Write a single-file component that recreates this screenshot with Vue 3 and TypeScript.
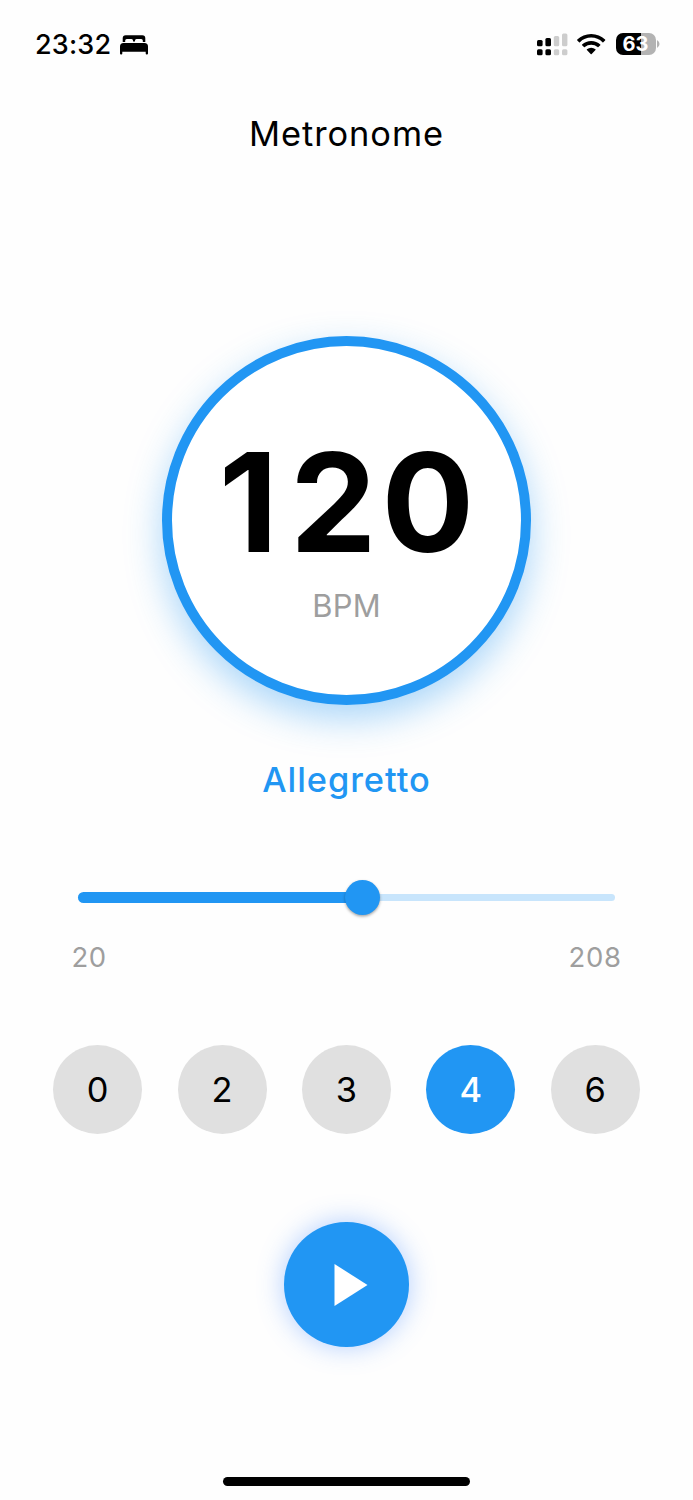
<script setup lang="ts">
import { computed, ref } from 'vue'

const min = 20
const max = 208
const bpm = ref<number>(120)
const beats: number[] = [0, 2, 3, 4, 6]
const selected = ref<number>(4)
const position = computed(() => `${((bpm.value - min) / (max - min)) * 100}%`)
const digits = computed(() => String(bpm.value).split(''))
</script>

<template>
  <main class="screen">
    <header class="status">
      <span class="clock">23:32</span>
      <svg class="bed" viewBox="0 0 28 20" width="28" height="20">
        <path d="M2.7 7V3.2Q2.7 .2 5.7 .2H22.3Q25.300 .2 25.300 3.200V7H22.800V5.600Q22.800 4 21.200 4H16.500Q15 4 15 5.500V6.400H13V5.500Q13 4 11.500 4H6.800Q5.200 4 5.200 5.600V7Z" />
        <path d="M0 11.500Q0 8 3.500 8H24.500Q28 8 28 11.500V18.500Q28 19.500 27 19.500H26.700Q25.700 19.500 25.700 18.500V16.700H2.300V18.500Q2.300 19.500 1.300 19.500H1Q0 19.500 0 18.500Z" />
      </svg>
      <svg class="signal" viewBox="0 0 31 23" width="31" height="23">
        <rect x="0" y="7" width="5.600" height="6.300" rx="1.500" />
        <rect x="8.400" y="5" width="5.600" height="8.300" rx="1.500" />
        <g fill="#cdcdcd">
          <rect x="16.800" y="3" width="5.400" height="10.300" rx="1.500" />
          <rect x="25" y="0.500" width="5.400" height="12.800" rx="1.500" />
          <rect x="16.800" y="16.300" width="5.400" height="6" rx="1.500" />
          <rect x="25" y="16.300" width="5.400" height="6" rx="1.500" />
        </g>
        <rect x="0" y="16.300" width="5.600" height="6" rx="1.500" />
        <rect x="8.400" y="16.300" width="5.600" height="6" rx="1.500" />
      </svg>
      <svg class="wifi" viewBox="0 0 28.400 21" width="28.400" height="21">
        <path d="M14.200 0C19.600 0 24.500 2.100 28.100 5.600Q28.500 6 28.100 6.400L26.300 8.200Q25.900 8.600 25.500 8.200A16.200 16.200 0 0 0 2.900 8.200Q2.500 8.600 2.100 8.200L.3 6.400Q-.1 6 .3 5.600C3.900 2.100 8.800 0 14.200 0Z" />
        <path d="M14.200 6.900C17.700 6.900 20.900 8.200 23.300 10.400Q23.700 10.800 23.300 11.200L21.400 13.100Q21 13.500 20.600 13.100A9.600 9.600 0 0 0 7.800 13.100Q7.400 13.500 7 13.100L5.100 11.200Q4.700 10.800 5.100 10.400C7.500 8.200 10.700 6.900 14.200 6.900Z" />
        <path d="M14.200 13.800Q16.600 13.800 18.500 15.300Q18.900 15.700 18.500 16.100L14.700 19.900Q14.200 20.400 13.700 19.900L9.900 16.100Q9.500 15.700 9.900 15.300Q11.800 13.800 14.200 13.800Z" />
      </svg>
      <div class="battery"><span class="charge">63</span></div>
      <svg class="cap" viewBox="0 0 3 8" width="3" height="8"><path d="M0 0Q2.500 1.500 2.500 4T0 8Z" fill="#b3b3b3" /></svg>
    </header>

    <h1 class="title">Metronome</h1>

    <section class="dial">
      <div class="count"><span v-for="(d, i) in digits" :key="i" :class="{ one: d === '1' }">{{ d }}</span></div>
      <div class="unit">BPM</div>
    </section>

    <div class="tempo">Allegretto</div>

    <div class="slider">
      <div class="rail"></div>
      <div class="fill" :style="{ width: position }"></div>
      <div class="thumb" :style="{ left: position }"></div>
    </div>
    <div class="limits"><span>{{ min }}</span><span>{{ max }}</span></div>

    <div class="beats">
      <button
        v-for="n in beats"
        :key="n"
        class="beat"
        :class="{ active: n === selected }"
        @click="selected = n"
      >{{ n }}</button>
    </div>

    <button class="play" aria-label="Play">
      <svg viewBox="0 0 34 42" width="34" height="42"><path d="M.5 0V42L33.500 21Z" fill="#fff" /></svg>
    </button>

    <div class="home"></div>
  </main>
</template>

<style>
body {
  margin: 0;
  background: #fefefe;
}
</style>

<style scoped>
.screen {
  box-sizing: border-box;
  width: 693px;
  height: 1500px;
  overflow: hidden;
  display: flex;
  flex-direction: column;
  align-items: center;
  background: #fefefe;
  color: #000;
  font-family: Inter, "Liberation Sans", sans-serif;
}
.status {
  box-sizing: border-box;
  width: 100%;
  height: 88px;
  flex: none;
  display: flex;
  align-items: center;
  padding: 0 33px 0 35px;
}
.clock {
  width: 85px;
  margin-top: 2px;
  font-size: 27px;
  line-height: 32px;
  font-weight: 500;
  letter-spacing: 0.2px;
  white-space: nowrap;
}
.bed {
  margin-top: 1px;
}
.signal {
  margin-left: auto;
  margin-right: -1px;
}
.wifi {
  margin-left: 10px;
}
.battery {
  width: 40px;
  height: 22.500px;
  margin-left: 10px;
  border-radius: 7px;
  background: linear-gradient(90deg, #000 63%, #b3b3b3 63%);
  display: flex;
  align-items: center;
  justify-content: center;
}
.cap {
  margin-left: 1.500px;
}
.charge {
  color: #fff;
  font-size: 20px;
  line-height: 22px;
  font-weight: 700;
}
.title {
  margin: 24px 0 0;
  height: 44px;
  line-height: 44px;
  font-size: 34.400px;
  font-weight: 400;
  letter-spacing: 0.95px;
}
.dial {
  box-sizing: border-box;
  width: 369.600px;
  height: 369.600px;
  flex: none;
  margin-top: 179.800px;
  border: 10.660px solid #2196f3;
  border-radius: 50%;
  background: #fff;
  box-shadow: 0 14px 36px rgba(33, 150, 243, 0.38);
  display: flex;
  flex-direction: column;
  align-items: center;
}
.count {
  display: flex;
  margin-top: 88px;
  height: 136px;
  line-height: 136px;
  font-size: 137.500px;
  font-weight: 700;
  letter-spacing: 5px;
}
.count .one {
  letter-spacing: 12px;
}
.count span:last-child {
  letter-spacing: 0;
}
.unit {
  margin-top: 16px;
  height: 40px;
  line-height: 40px;
  font-size: 30.900px;
  letter-spacing: 0.3px;
  color: #9e9e9e;
}
.tempo {
  margin-top: 53px;
  height: 44px;
  line-height: 44px;
  font-size: 34.400px;
  font-weight: 500;
  letter-spacing: 0.95px;
  color: #2196f3;
}
.slider {
  position: relative;
  width: 536.500px;
  height: 36px;
  margin-top: 77px;
  display: flex;
  align-items: center;
}
.rail {
  width: 100%;
  height: 7.100px;
  border-radius: 4px;
  background: #c8e5fc;
}
.fill {
  position: absolute;
  left: 0;
  top: 12.600px;
  height: 10.700px;
  border-radius: 6px;
  background: #2196f3;
}
.thumb {
  position: absolute;
  top: 0.200px;
  width: 35.600px;
  height: 35.600px;
  margin-left: -19px;
  border-radius: 50%;
  background: #2196f3;
  box-shadow: 0 1.500px 3px rgba(0, 0, 0, 0.35);
}
.limits {
  width: 550px;
  margin-top: 24px;
  height: 36px;
  line-height: 36px;
  display: flex;
  justify-content: space-between;
  font-size: 27.500px;
  letter-spacing: 0.6px;
  color: #9e9e9e;
}
.beats {
  margin-top: 69.500px;
  display: flex;
  gap: 35.500px;
}
.beat {
  box-sizing: border-box;
  width: 88.900px;
  height: 88.900px;
  padding: 1px 0 0;
  border: 0;
  border-radius: 50%;
  background: #e0e0e0;
  color: #000;
  font: 400 34.400px/88px Inter, "Liberation Sans", sans-serif;
}
.beat.active {
  background: #2196f3;
  color: #fff;
  font-weight: 500;
}
.play {
  width: 124.400px;
  height: 124.400px;
  flex: none;
  margin-top: 88.700px;
  padding: 0 0 0 9px;
  border: 0;
  border-radius: 50%;
  background: #2196f3;
  box-shadow: 0 0 27px rgba(68, 138, 255, 0.42);
  display: flex;
  align-items: center;
  justify-content: center;
}
.home {
  width: 247px;
  height: 9px;
  flex: none;
  margin-top: 129.800px;
  border-radius: 5px;
  background: #000;
}
</style>
